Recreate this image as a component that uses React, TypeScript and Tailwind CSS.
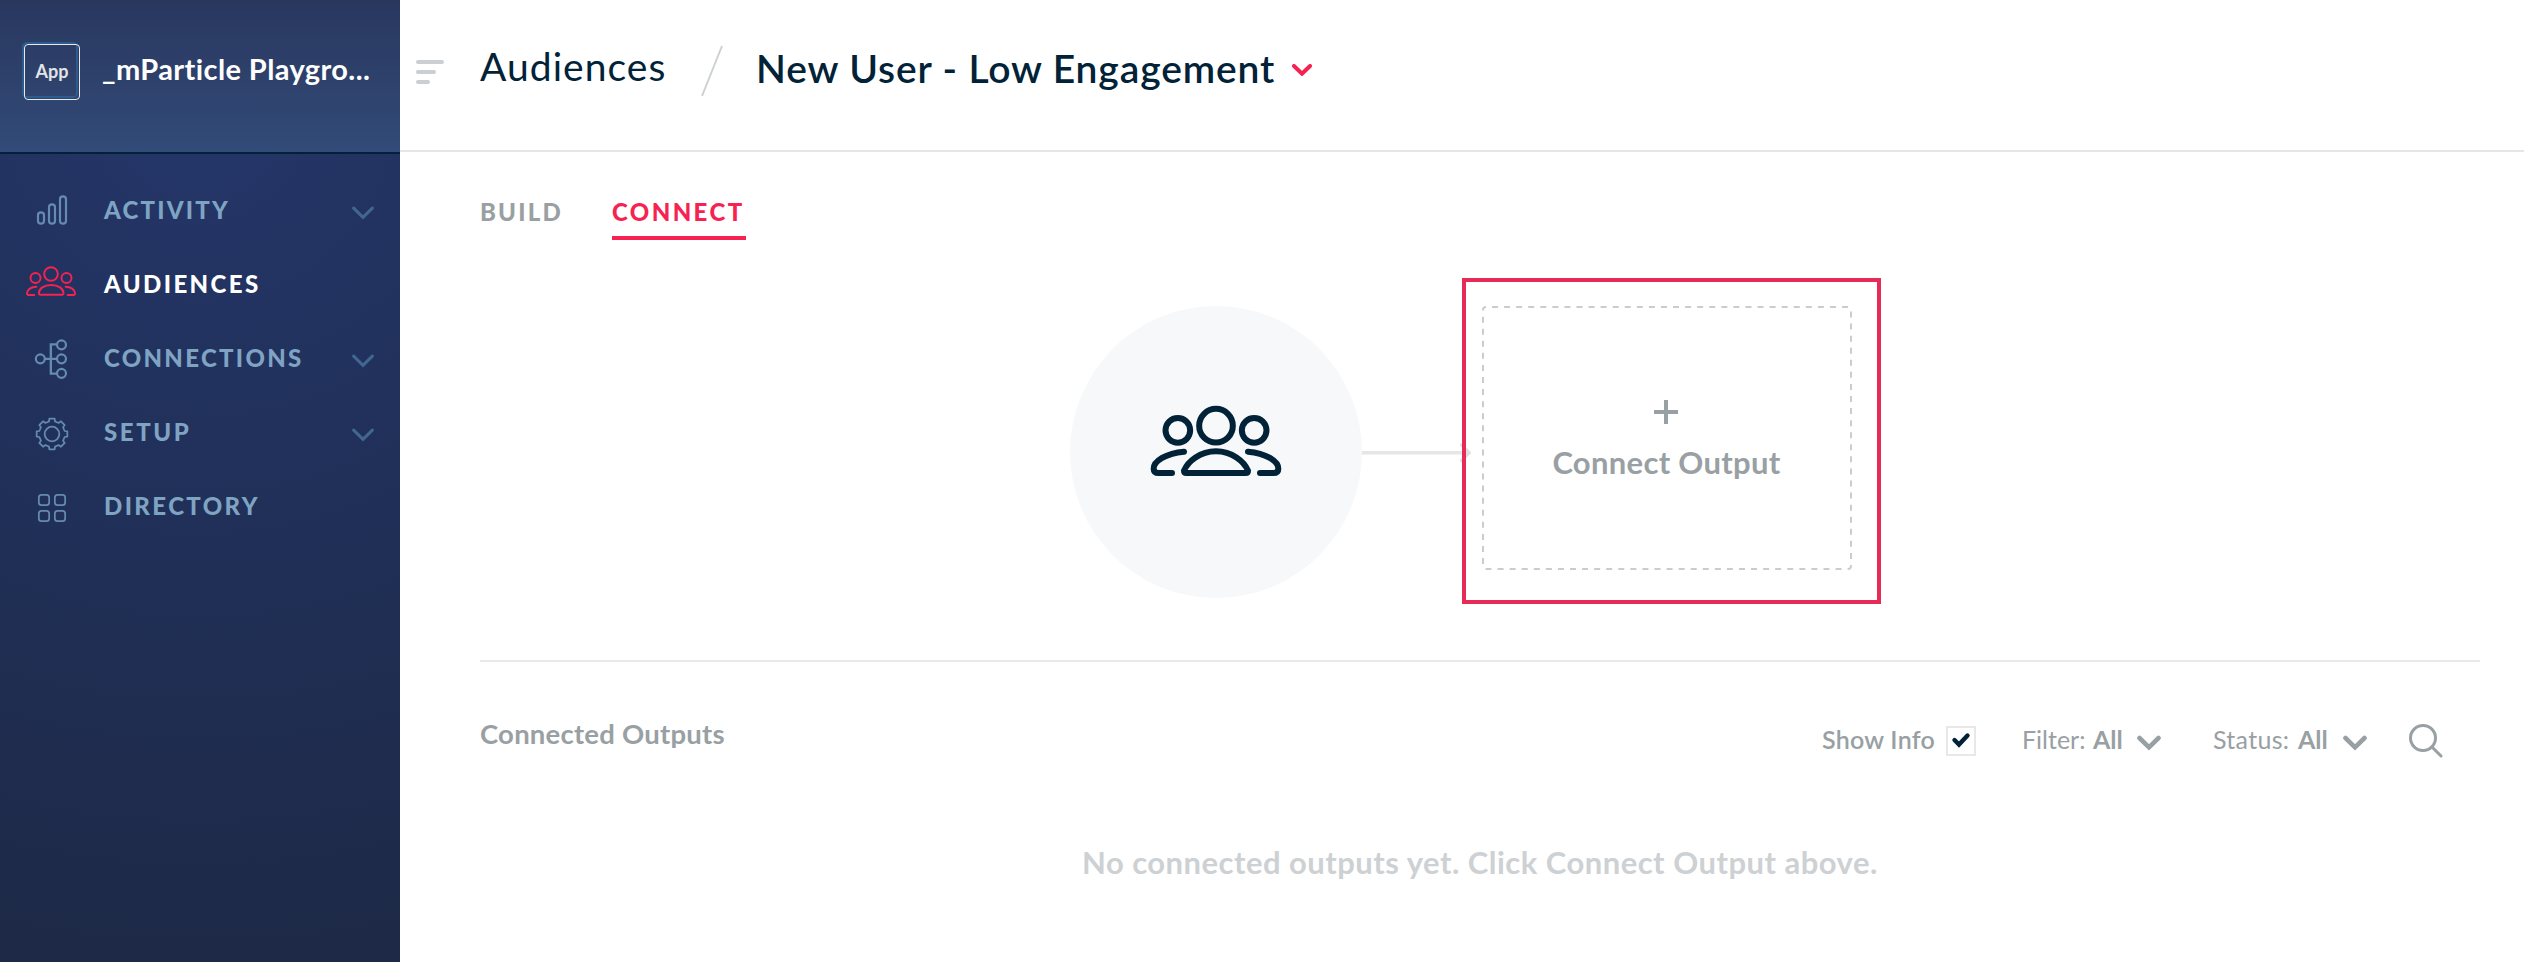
import React from 'react';

const gearPath = (() => {
  const profile: [number, number][] = [
    [-13.5, 36],
    [-9, 38],
    [-8, 46],
    [8, 46],
    [9, 38],
    [13.5, 36],
  ];
  const points: string[] = [];
  for (let tooth = 0; tooth < 8; tooth++) {
    const angle = (tooth * Math.PI) / 4;
    for (const [u, v] of profile) {
      const x = 156 + u * Math.cos(angle) + v * Math.sin(angle);
      const y = 120 + u * Math.sin(angle) - v * Math.cos(angle);
      points.push(`${x.toFixed(1)} ${y.toFixed(1)}`);
    }
  }
  return `M${points.join('L')}Z`;
})();

const icons = {
  activity: (
    <g strokeWidth="6.500">
      <rect x="114" y="121" width="18" height="34" rx="9" />
      <rect x="147" y="97" width="18" height="58" rx="9" />
      <rect x="180" y="73" width="18" height="82" rx="9" />
    </g>
  ),
  audiences: (
    <g strokeWidth="5.800">
      <circle cx="153" cy="84" r="20.500" />
      <circle cx="106.500" cy="96" r="15" />
      <circle cx="199.500" cy="96" r="15" />
      <path d="M116.500 141C117 128 132 117 153.500 117S190.500 128 190.500 141Q190.500 146.500 185 146.500H122Q116.500 146.500 116.500 141Z" />
      <path d="M109 122C94 122 81 131 81 142Q81 147 86 147H103" />
      <path d="M197 122C212 122 225 131 225 142Q225 147 220 147H203" />
    </g>
  ),
  connections: (
    <g strokeWidth="6.500">
      <circle cx="121" cy="116.500" r="13.500" />
      <circle cx="184.500" cy="74.500" r="13.500" />
      <circle cx="184.500" cy="116.500" r="13.500" />
      <circle cx="184.500" cy="160" r="13.500" />
      <path d="M135 116.500H171M170 73H152.500V161H170" strokeWidth="7" strokeLinejoin="miter" strokeLinecap="butt" />
    </g>
  ),
  setup: (
    <g strokeWidth="5.200">
      <circle cx="156" cy="120" r="22" />
      <path d={gearPath} />
    </g>
  ),
  directory: (
    <g strokeWidth="5.200">
      <rect x="116.500" y="80.500" width="31" height="31" rx="8" />
      <rect x="164.500" y="80.500" width="31" height="31" rx="8" />
      <rect x="116.500" y="128.500" width="31" height="31" rx="8" />
      <rect x="164.500" y="128.500" width="31" height="31" rx="8" />
    </g>
  ),
};

const navItems: { icon: keyof typeof icons; label: string; tracking: string; expandable?: boolean; active?: boolean }[] = [
  { icon: 'activity', label: 'ACTIVITY', tracking: 'tracking-[2.2px]', expandable: true },
  { icon: 'audiences', label: 'AUDIENCES', tracking: 'tracking-[2.4px]', active: true },
  { icon: 'connections', label: 'CONNECTIONS', tracking: 'tracking-[2.3px]', expandable: true },
  { icon: 'setup', label: 'SETUP', tracking: 'tracking-[2.6px]', expandable: true },
  { icon: 'directory', label: 'DIRECTORY', tracking: 'tracking-[2.4px]' },
];

function Sidebar() {
  return (
    <aside className="flex h-full w-[400px] shrink-0 flex-col bg-[radial-gradient(ellipse_900px_860px_at_50%_12%,#243669_0%,#1d2946_100%)]">
      <div className="flex h-[154px] items-start border-b-2 border-[#04213a] bg-linear-to-b from-[#29375f] to-[#324b78] pl-[24px]">
        <div className="relative mt-[44px] size-[56px] shrink-0">
          <div className="absolute -top-[2px] -left-[2px] size-[56px] rounded-[5px] border-2 border-[#2c5b8d]" />
          <div className="relative flex size-[56px] justify-center rounded-[4px] border border-[#e8eaf0] pt-[14px] text-[18px] leading-[24px] font-bold text-[#e2e4e8]">
            App
          </div>
        </div>
        <div className="mt-[49px] ml-[22px] w-[268px] overflow-hidden text-[29px] leading-[40px] font-bold tracking-[0.4px] whitespace-nowrap text-white">
          _mParticle Playgro...
        </div>
      </div>
      <nav className="flex flex-col pt-[18px]">
        {navItems.map((item) => (
          <a key={item.label} className="flex h-[74px] items-center">
            <svg
              viewBox="0 0 312 222"
              fill="none"
              strokeLinecap="round"
              strokeLinejoin="round"
              className={item.active ? 'h-[74px] w-[104px] stroke-[#f62252]' : 'h-[74px] w-[104px] stroke-[#658bb0]'}
            >
              {icons[item.icon]}
            </svg>
            <span
              className={`pt-[2px] text-[24px] leading-[40px] font-black ${item.tracking} ${item.active ? 'text-white' : 'text-[#7fa4c3]'}`}
            >
              {item.label}
            </span>
            {item.expandable && (
              <svg viewBox="1044 0 90 222" fill="none" className="mr-[22px] ml-auto h-[74px] w-[30px]">
                <path d="M1061 108.500L1089 136L1117 108.500" stroke="#416791" strokeWidth="9.500" strokeLinecap="round" />
              </svg>
            )}
          </a>
        ))}
      </nav>
    </aside>
  );
}

function Header() {
  return (
    <header className="flex h-[152px] items-start border-b-2 border-[#e6e6e6] pl-[16px]">
      <div className="mt-[60px] flex w-[64px] flex-col gap-[6px]">
        <span className="h-[4px] w-[28px] rounded-full bg-[#cccfd2]" />
        <span className="h-[4px] w-[20px] rounded-full bg-[#cccfd2]" />
        <span className="h-[4px] w-[14px] rounded-full bg-[#cccfd2]" />
      </div>
      <div className="mt-[42px] w-[220px] text-[39px] leading-[48px] tracking-[1.050px] text-[#022237]">Audiences</div>
      <svg viewBox="0 0 24 54" fill="none" className="mt-[44px] h-[54px] w-[24px]">
        <path d="M2 52L22 2" stroke="#cdd1d3" strokeWidth="2" />
      </svg>
      <h1 className="mt-[44px] ml-[32px] w-[520px] text-[39px] leading-[48px] font-semibold tracking-[0.87px] whitespace-nowrap text-[#022237]">
        New User - Low Engagement
      </h1>
      <svg viewBox="0 0 20 12" fill="none" className="mt-[64px] ml-[16px] h-[12px] w-[20px]">
        <path d="M2 2L10 9.700L18 2" stroke="#f62252" strokeWidth="4" strokeLinecap="round" />
      </svg>
    </header>
  );
}

function Diagram() {
  return (
    <section className="mt-[38px] flex h-[326px] items-start pl-[670px]">
      <div className="mt-[28px] flex size-[292px] shrink-0 items-start justify-center rounded-full bg-[#f7f8fa]">
        <svg
          viewBox="270 375 396 216"
          fill="none"
          stroke="#022237"
          strokeWidth="18"
          strokeLinecap="round"
          strokeLinejoin="round"
          className="mt-[99px] h-[72px] w-[132px]"
        >
          <circle cx="468" cy="437" r="50.500" />
          <circle cx="353.500" cy="451" r="37" />
          <circle cx="582.500" cy="451" r="37" />
          <path d="M372 572C384 544 420 514 468 514S552 544 564 572Q564 579 557 579H379Q372 579 372 572Z" />
          <path d="M372 515C318 519 281 544 281 566Q281 579 296 579H336" />
          <path d="M564 515C618 519 655 544 655 566Q655 579 640 579H600" />
        </svg>
      </div>
      <svg viewBox="0 0 110 20" fill="none" className="-mr-[10px] mt-[165px] h-[20px] w-[110px] shrink-0">
        <path d="M0 9.800H106" stroke="#e6e6e6" strokeWidth="3.600" />
        <path d="M99.500 2L107.500 9.800L99.500 17.600" stroke="#dedede" strokeWidth="3" strokeLinecap="round" strokeLinejoin="round" />
        <path d="M102 5V15L108 9.800Z" fill="#dedede" />
      </svg>
      <div className="relative h-[326px] w-[419px] shrink-0 border-4 border-[#e62b56] pt-[24px] pl-[16px]">
        <button className="relative flex h-[264px] w-[370px] flex-col items-center">
          <svg viewBox="0 0 370 264" fill="none" className="absolute inset-0 h-[264px] w-[370px]">
            <rect x="1" y="1" width="368" height="262" rx="3" stroke="#cccccc" strokeWidth="2" strokeDasharray="6 6.070" strokeDashoffset="-6" />
          </svg>
          <svg viewBox="0 0 24 24" fill="none" className="mt-[94px] mr-[2px] size-[24px]">
            <path d="M12 0V24M0 12H24" stroke="#98a0a3" strokeWidth="4" />
          </svg>
          <span className="mt-[18px] mr-px text-[31px] leading-[40px] font-bold tracking-[0.3px] text-[#98a0a3]">Connect Output</span>
        </button>
      </div>
    </section>
  );
}

function Caret() {
  return (
    <svg viewBox="0 0 24 16" fill="none" className="mt-[22px] h-[16px] w-[24px]">
      <path d="M2.500 3L12 12.300L21.500 3" stroke="#98a0a3" strokeWidth="4.600" strokeLinecap="round" />
    </svg>
  );
}

function Toolbar() {
  return (
    <div className="mt-[51px] flex h-[48px] items-start pl-[80px]">
      <h2 className="mt-px text-[27.5px] leading-[40px] font-bold tracking-[0.22px] text-[#98a0a3]">Connected Outputs</h2>
      <div className="mr-[81px] ml-auto flex items-start text-[25px] leading-[40px] whitespace-nowrap text-[#98a0a3]">
        <span className="mt-[6px] w-[124px] font-semibold tracking-[0.25px]">Show Info</span>
        <span className="mt-[13px] flex size-[30px] items-center justify-center border-2 border-[#e8e8e8]">
          <svg viewBox="0 0 20 16" fill="none" className="-mt-[3px] h-[16px] w-[20px]">
            <path d="M3.500 8L8 12.500L16.500 3.500" stroke="#022237" strokeWidth="4.400" strokeLinecap="round" />
          </svg>
        </span>
        <span className="mt-[6px] ml-[46px] w-[71px] font-normal">Filter:</span>
        <span className="mt-[6px] w-[44px] font-bold">All</span>
        <Caret />
        <span className="mt-[6px] ml-[52px] w-[85px] font-normal tracking-[0.3px]">Status:</span>
        <span className="mt-[6px] w-[45px] font-bold">All</span>
        <Caret />
        <svg viewBox="0 0 34 34" fill="none" className="mt-[11px] ml-[42px] size-[34px]">
          <circle cx="14" cy="14" r="12.500" stroke="#98a0a3" strokeWidth="3" />
          <path d="M23 23L32 32" stroke="#98a0a3" strokeWidth="3" strokeLinecap="round" />
        </svg>
      </div>
    </div>
  );
}

export default function App() {
  return (
    <div className="flex h-[962px] w-full overflow-hidden bg-white font-['Lato',sans-serif]">
      <Sidebar />
      <main className="flex min-w-0 flex-1 flex-col">
        <Header />
        <div className="mt-[39px] flex h-[49px] items-start pl-[80px] text-[24px] leading-[40px] font-black">
          <a className="w-[132px] pt-px tracking-[2.2px] text-[#98a0a3]">BUILD</a>
          <a className="h-[49px] w-[134px] border-b-4 border-[#f62252] pt-px tracking-[2.4px] text-[#f62252]">CONNECT</a>
        </div>
        <Diagram />
        <div className="mt-[56px] mr-[44px] ml-[80px] h-[2px] shrink-0 bg-[#e8eaea]" />
        <Toolbar />
        <p className="mt-[81px] pl-[682px] text-[31px] leading-[40px] font-bold tracking-[0.48px] whitespace-nowrap text-[#cdd1d3]">
          No connected outputs yet. Click Connect Output above.
        </p>
      </main>
    </div>
  );
}
